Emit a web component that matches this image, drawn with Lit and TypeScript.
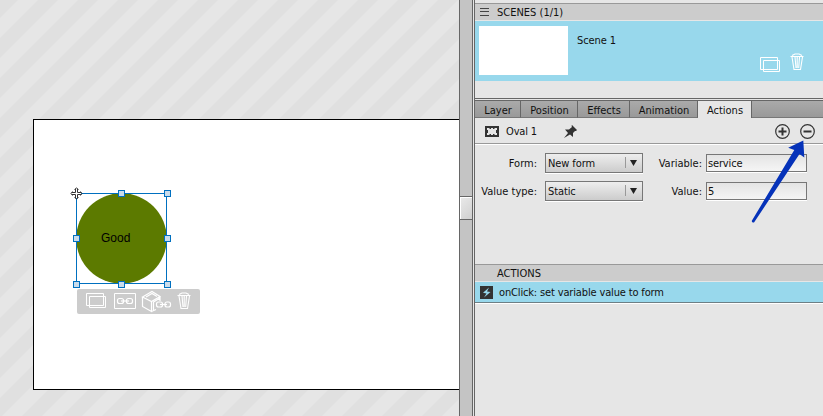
import { LitElement, html, svg, css } from "lit";
import { customElement } from "lit/decorators.js";

const copyIcon = svg`<path d="M.5 .5H17.5V12.5H.5Z M3.5 3.5H19.5V14.5H3.5Z"/>`;
const trashIcon = svg`<path stroke-width="1.100" d="M.5 3.500H13.500M2 2.500L5 1H9L12 2.500M2 4L4 16.500H10.500L12.500 4M5 4L6 15M7.200 4V15M9.500 4L8.700 15"/>`;

@customElement("app-root")
export class AppRoot extends LitElement {
  static styles = css`
    :host { display: flex; width: 823px; height: 416px; overflow: hidden; background: #e6e6e6; color: #111;
      font: 11px/16px "DejaVu Sans Condensed", "DejaVu Sans", sans-serif; font-stretch: condensed; }
    * { box-sizing: border-box; }
    svg { display: block; fill: none; stroke: #fff; overflow: visible; flex: none; }
    .stage { position: relative; width: 459px; flex: none; padding: 119px 0 26px 33px; }
    .stripes { position: absolute; inset: 0; }
    .page { position: relative; height: 271px; background: #fff; border: 1px solid #000; border-right: 0; }
    .shape { position: absolute; left: 38px; top: 69px; }
    .shape text { font: 12px "Liberation Sans", Arial, sans-serif; fill: #000; stroke: none; }
    .tools { position: absolute; left: 43px; top: 169px; width: 123px; height: 25px; border-radius: 2px; background: #ccc; }
    .split { width: 14px; margin-right: 1px; flex: none; background: #c4c4c4; border-left: 1px solid #666; border-right: 1px solid #666; padding-top: 196px; }
    .grip { height: 24px; width: 12px; border: 1px solid #666; border-width: 1px 0; background: linear-gradient(135deg, #eaeaea, #d0d0d0); box-shadow: inset 1px 1px #fff; }
    .panel { flex: 1; border-left: 1px solid #666; padding-top: 3px; min-width: 0; }
    .head { height: 18px; background: #ccc; border-top: 1px solid #999; border-bottom: 1px solid #e6e6e6; display: flex; align-items: center; padding-top: 2px; }
    .scenes svg { stroke: #444; margin: -2px 0 0 5px; }
    .scenes span { margin-left: 7px; }
    .scene { height: 60px; background: #98d8ec; display: flex; padding: 5px 0 0 4px; }
    .thumb { width: 89px; height: 49px; background: #fff; }
    .name { margin: 7px 0 0 9px; width: 183px; letter-spacing: -.1px; }
    .scene svg.copy { margin-top: 31px; }
    .scene svg.trash { margin: 27px 0 0 10px; }
    .rest { height: 18px; border-bottom: 1px solid #666; margin-bottom: 1px; }
    .tabs { height: 18px; width: 348px; display: flex; border-top: 1px solid #666; }
    .tab { background: linear-gradient(#aaa, #999); border-right: 1px solid #666; border-bottom: 1px solid #777; text-align: center; padding: 2px 0 0 1px; }
    .tab.on { background: #e6e6e6; border-bottom: 0; }
    .fill { flex: 1; background: linear-gradient(#aaa, #999); border-bottom: 1px solid #777; }
    .bar { height: 26px; border-bottom: 1px solid #999; box-shadow: 0 1px #fff; display: flex; align-items: center; padding: 2px 0 0 10px; }
    .bar span { margin-left: 7px; width: 58px; letter-spacing: -.15px; }
    .bar svg.round { margin-left: 198px; }
    .form { display: grid; grid-template-columns: 62px 106px 59px 105px; grid-template-rows: 20px 20px; row-gap: 8px; padding-top: 9px; height: 120px; align-items: center; }
    .lab { text-align: right; padding-top: 1px; }
    .form .in { margin-left: 4px; width: 101px; height: 18px; border: 1px solid #777; background: linear-gradient(#e4e4e4, #f5f5f5); box-shadow: 0 1px #fff; padding-left: 1px; line-height: 17px; letter-spacing: -.15px; }
    .sel { margin-left: 8px; width: 98px; height: 20px; border: 1px solid #777; background: linear-gradient(#eee, #ccc); box-shadow: 0 1px #fff; display: flex; align-items: center; padding-left: 2px; }
    .sel span { padding-top: 2px; letter-spacing: -.1px; }
    .sel svg { margin-left: auto; margin-right: 0; }
    .acts { padding-left: 22px; }
    .act { height: 21px; width: 348px; background: #98d8ec; border-bottom: 1px solid #6d7f85; box-shadow: 0 1px #fff; display: flex; align-items: center; padding-left: 5px; }
    .act span { margin-left: 6px; padding-top: 2px; letter-spacing: -.15px; }
    .arrow { position: absolute; left: 750px; top: 138px; }
  `;

  sel(t: string) {
    return html`<div class="sel"><span>${t}</span><svg width="19" height="14"><path d="M2.5 1V12" stroke="#999"/><path d="M7 4H14L10.500 10Z" fill="#222" stroke="none"/></svg></div>`;
  }

  render() {
    const handles = [[45, 5], [91, 5], [0, 50], [91, 50], [0, 96], [45, 96], [91, 96]];
    return html`
      <div class="stage">
        <svg class="stripes" width="459" height="416">
          <defs><pattern id="diag" width="40" height="40" patternUnits="userSpaceOnUse">
            <path d="M0 0H18L0 18Z M38 0H40V18L18 40H0V38Z M40 38V40H38Z" fill="#e0e0e0" stroke="none"/>
          </pattern></defs>
          <rect width="459" height="416" fill="url(#diag)" stroke="none"/>
        </svg>
        <div class="page">
          <svg class="shape" width="100" height="100">
            <circle cx="49.500" cy="49.500" r="45.300" fill="#5c7a00" stroke="none"/>
            <rect x="4.500" y="4.500" width="90" height="90" stroke="#0070c0"/>
            ${handles.map(([x, y]) => svg`<rect x=${x + 1.5} y=${y - 3.5} width="6" height="6" fill="#c9dcec" stroke="#0070c0"/>`)}
            <text x="29" y="53">Good</text>
            <path d="M4.500 0V9M0 4.500H9" stroke="#fff" stroke-width="3"/>
            <path d="M3.500 0V3.500H0M5.500 0V3.500H9M3.500 9V5.500H0M5.500 9V5.500H9M2.500 .5L4.500 -1L6.500 .5M2.500 8.500L4.500 10L6.500 8.500M.5 2.500L-1 4.500L.5 6.500M8.500 2.500L10 4.500L8.500 6.500" stroke="#333"/>
          </svg>
          <div class="tools"><svg width="123" height="25">
            <g transform="translate(9 4)">${copyIcon}</g>
            <path d="M37.500 4.500H58.500V19.500H37.500Z"/>
            <g stroke-width="1.200"><rect x="40.500" y="9.500" width="6" height="5" rx="2"/><rect x="49.500" y="9.500" width="6" height="5" rx="2"/><path d="M44 12H52"/>
            <path d="M65.500 8L75 2.500L83 7.500L74.500 12.500ZM65.500 8V17.500L74.500 22.500V12.500M83 7.500V12M76.500 21.500V13L83 9M69 8L75 4.500L80 7.500M74.500 22.500L79 20.500"/>
            <rect x="79.500" y="13" width="6" height="5" rx="2"/><rect x="88" y="13" width="5.500" height="5" rx="2"/><path d="M83 15.500H90"/></g>
            <g transform="translate(100 3)">${trashIcon}</g>
          </svg></div>
        </div>
      </div>
      <div class="split"><div class="grip"></div></div>
      <div class="panel">
        <div class="head scenes"><svg width="10" height="8"><path d="M0 .5H9M0 3.500H9M0 7.500H9"/></svg><span>SCENES (1/1)</span></div>
        <div class="scene"><div class="thumb"></div><div class="name">Scene 1</div>
          <svg class="copy" width="20" height="15">${copyIcon}</svg>
          <svg class="trash" width="15" height="17">${trashIcon}</svg>
        </div>
        <div class="rest"></div>
        <div class="tabs">
          <div class="tab" style="width:46px">Layer</div><div class="tab" style="width:57px">Position</div><div class="tab" style="width:52px">Effects</div><div class="tab" style="width:68px">Animation</div><div class="tab on" style="width:54px">Actions</div><div class="fill"></div>
        </div>
        <div class="bar">
          <svg width="14" height="11"><path d="M0 0H14V11H0Z" fill="#333" stroke="none"/><path d="M2 2H4.500V3H6V2H8V3H9.500V2H12V4H11V7H12V9H9.500V8H8V9H6V8H4.500V9H2V7H3V4H2Z" fill="#e6e6e6" stroke="none"/></svg>
          <span>Oval 1</span>
          <svg width="13" height="13"><path d="M8 0L13 5L12 6H11L9 8L9 12L6 9.500L0 13L4 8L1 4.500L5 4.500L8 2L7.500 1Z" fill="#333" stroke="none"/></svg>
          <svg class="round" width="40" height="15"><g stroke="#333"><circle cx="7.500" cy="7.500" r="6.800" stroke-width="1.200"/><circle cx="32.500" cy="7.500" r="6.800" stroke-width="1.200"/><path d="M3.500 7.500H11.500M7.500 3.500V11.500M28.500 7.500H36.500" stroke-width="2"/></g></svg>
        </div>
        <div class="form">
          <div class="lab">Form:</div>${this.sel("New form")}<div class="lab">Variable:</div><div class="in">service</div>
          <div class="lab">Value type:</div>${this.sel("Static")}<div class="lab">Value:</div><div class="in">5</div>
        </div>
        <div class="head acts">ACTIONS</div>
        <div class="act"><svg width="13" height="13"><path d="M0 0H13V13H0Z" fill="#333" stroke="none"/><path d="M9 1.500L3 6.800L6.500 7.500L4 11.500L10.500 6L7 5.500Z" fill="#98d8ec" stroke="none"/></svg><span>onClick: set variable value to form</span></div>
      </div>
      <svg class="arrow" width="60" height="90"><path d="M53.300 2.500L54.300 19.500L49.500 16L4 84.500Q2 85 1.700 83L44.300 12L38.200 9.800Z" fill="#0532b9" stroke="none"/></svg>
    `;
  }
}
